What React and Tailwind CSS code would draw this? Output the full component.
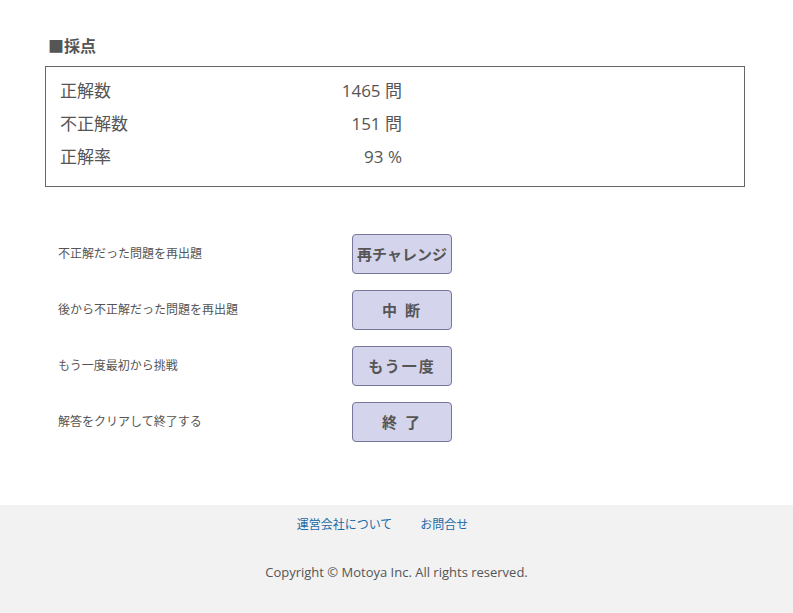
const scores = [
  { label: '正解数', value: '1465 問' },
  { label: '不正解数', value: '151 問' },
  { label: '正解率', value: '93 %' },
];

const actions = [
  { desc: '不正解だった問題を再出題', button: '再チャレンジ', wide: false },
  { desc: '後から不正解だった問題を再出題', button: '中 断', wide: true },
  { desc: 'もう一度最初から挑戦', button: 'もう一度', wide: true },
  { desc: '解答をクリアして終了する', button: '終 了', wide: true },
];

export default function App() {
  return (
    <div
      className="min-h-[613px] bg-white text-[#555555] flex flex-col"
      style={{ fontFamily: '"Open Sans", "Noto Sans CJK JP", sans-serif' }}
    >
      <main className="flex-1 px-[45px] pt-[35px]">
        {/* Score */}
        <h2 className="pl-[3px] text-base font-bold leading-[22px] text-[#555555]">■採点</h2>
        <div className="mt-[9px] w-[700px] h-[121px] border border-[#666666] pl-[14px] pt-[7px]">
          {scores.map((s) => (
            <div key={s.label} className="flex items-center h-[33px] text-[17px]">
              <span className="w-[200px]">{s.label}</span>
              <span className="w-[142px] text-right">{s.value}</span>
            </div>
          ))}
        </div>

        {/* Actions */}
        <div className="mt-[47px] flex flex-col gap-[16px]">
          {actions.map((a) => (
            <div key={a.desc} className="flex items-center h-[40px]">
              <span className="w-[307px] pl-[13px] text-xs">{a.desc}</span>
              <button
                className={`w-[100px] h-[40px] rounded-[4px] border border-[#77779a] bg-[#d4d4ec] text-[15px] font-bold text-[#555555] ${
                  a.wide ? 'tracking-[2px]' : 'tracking-normal'
                }`}
              >
                {a.button}
              </button>
            </div>
          ))}
        </div>
      </main>

      {/* Footer */}
      <footer className="h-[108px] bg-[#f2f2f2] flex flex-col items-center pt-[10px]">
        <div className="flex text-xs leading-[20px] text-[#1a6aa8]">
          <a href="#" className="mr-[28px]">運営会社について</a>
          <a href="#" className="mr-[28px]">お問合せ</a>
        </div>
        <p className="mt-[27px] text-[13px] leading-[20px] text-[#555555]">
          Copyright © Motoya Inc. All rights reserved.
        </p>
      </footer>
    </div>
  );
}
